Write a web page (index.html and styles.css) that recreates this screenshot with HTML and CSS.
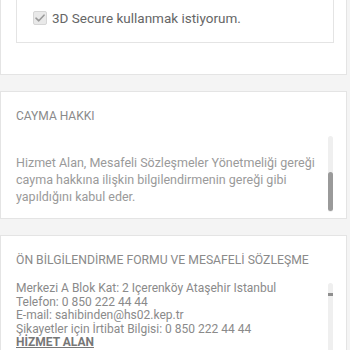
FILE: index.html
```html
<!DOCTYPE html>
<html lang="tr">
<head>
<meta charset="utf-8">
<link rel="stylesheet" href="styles.css">
</head>
<body>
<div class="page">
  <section class="card card-top">
    <div class="secure-box">
      <label class="check-row">
        <span class="checkbox">
          <svg width="10" height="8" viewBox="0 0 10 8"><path d="M1 4.2 L3.8 6.8 L9 1.2" fill="none" stroke="#9a9a9a" stroke-width="1.6" stroke-linecap="round" stroke-linejoin="round"/></svg>
        </span>
        <span class="check-label">3D Secure kullanmak istiyorum.</span>
      </label>
    </div>
  </section>

  <section class="card card-cayma">
    <h2 class="card-title">CAYMA HAKKI</h2>
    <div class="scroll-area cayma-area">
      <p class="cayma-text">Hizmet Alan, Mesafeli Sözleşmeler Yönetmeliği gereği cayma hakkına ilişkin bilgilendirmenin gereği gibi yapıldığını kabul eder.</p>
      <div class="track cayma-track"><div class="thumb cayma-thumb"></div></div>
    </div>
  </section>

  <section class="card card-form">
    <h2 class="card-title form-title">ÖN BİLGİLENDİRME FORMU VE MESAFELİ SÖZLEŞME</h2>
    <div class="scroll-area form-area">
      <div class="form-text">
        <div>Merkezi A Blok Kat: 2 Içerenköy Ataşehir Istanbul</div>
        <div>Telefon: 0 850 222 44 44</div>
        <div>E-mail: sahibinden@hs02.kep.tr</div>
        <div>Şikayetler için İrtibat Bilgisi: 0 850 222 44 44</div>
        <div class="strong">HİZMET ALAN</div>
        <div>Adı soyadı: Mehmet Keplan</div>
      </div>
      <div class="track form-track"><div class="thumb form-thumb"></div></div>
    </div>
  </section>
</div>
</body>
</html>
```

FILE: styles.css
```css
* { box-sizing: border-box; }
html, body { margin: 0; padding: 0; }
body {
  background: #f4f4f4;
  font-family: Roboto, "Liberation Sans", sans-serif;
  height: 350px;
  overflow: hidden;
}
.page { width: 347px; }
.card {
  background: #fff;
  border: 1px solid #e4e4e4;
}
.card-top {
  border-top: none;
  padding: 0 12px 31px 15px;
}
.secure-box {
  border: 1px solid #e4e4e4;
  border-top: none;
  padding: 10px 16px 16px 16px;
}
.check-row {
  display: flex;
  align-items: center;
  gap: 5px;
}
.checkbox {
  width: 14px;
  height: 14px;
  border: 1px solid #d6d6d6;
  border-radius: 2px;
  background: #e9e9e9;
  display: flex;
  align-items: center;
  justify-content: center;
}
.check-label {
  font-size: 13.5px;
  color: #666;
}
.card-cayma { margin-top: 16px; height: 128px; padding: 0 13px 0 15px; }
.card-title {
  margin: 0;
  font-weight: 400;
  font-size: 12px;
  color: #8a8a8a;
  padding-top: 17px;
  line-height: 15px;
}
.scroll-area {
  display: flex;
  justify-content: space-between;
}
.cayma-area { margin-top: 12px; height: 76px; }
.cayma-text {
  margin: 0;
  padding-top: 18px;
  width: 306px;
  font-size: 12.5px;
  line-height: 17px;
  color: #9a9a9a;
}
.track {
  width: 5px;
  background: #efefef;
  border-radius: 3px;
  position: relative;
}
.thumb {
  position: absolute;
  left: 0;
  width: 5px;
  background: #9a9a9a;
  border-radius: 3px;
}
.cayma-thumb { top: 36px; height: 39px; }
.card-form { margin-top: 16px; padding: 0 13px 0 15px; height: 140px; }
.form-title { font-size: 12.2px; padding-top: 17px; line-height: 15px; }
.form-area { margin-top: 14px; }
.form-text {
  font-size: 12px;
  line-height: 13.6px;
  color: #8a8a8a;
}
.form-text .strong {
  font-weight: 700;
  text-decoration: underline;
  color: #777;
}
.form-track { height: 80px; margin-top: 1px; }
.form-thumb { top: 10px; height: 3px; border-radius: 0; background: #8f8f8f; }
```
